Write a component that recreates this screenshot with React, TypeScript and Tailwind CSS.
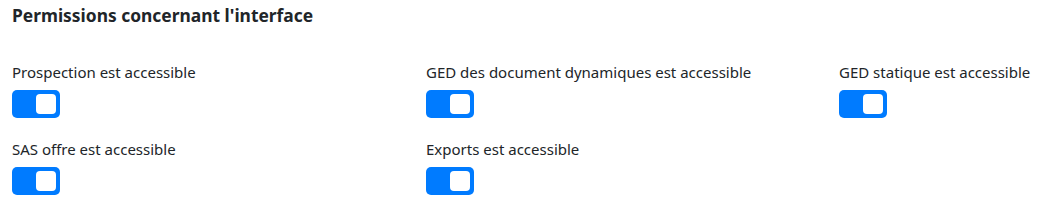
const items = [
  'Prospection est accessible',
  'GED des document dynamiques est accessible',
  'GED statique est accessible',
  'SAS offre est accessible',
  'Exports est accessible',
];

function Toggle() {
  return (
    <div className="flex h-[28px] w-[48px] items-center justify-end rounded-[5px] bg-[#007bff] pr-[4px]">
      <div className="h-[20px] w-[20px] rounded-[4px] bg-white" />
    </div>
  );
}

export default function App() {
  return (
    <div className="bg-white px-[12px] pt-[3px] text-[#212529] font-['Segoe_UI','Noto_Sans',sans-serif]">
      <h2 className="text-[17.4px] font-bold leading-[24px]">Permissions concernant l'interface</h2>
      <div className="mt-[35px] grid grid-cols-[414px_413px_1fr] gap-y-[21px]">
        {items.map((label) => (
          <div key={label} className="flex flex-col">
            <span className="text-[15px] leading-[21px]">{label}</span>
            <div className="mt-[7px]">
              <Toggle />
            </div>
          </div>
        ))}
      </div>
    </div>
  );
}
